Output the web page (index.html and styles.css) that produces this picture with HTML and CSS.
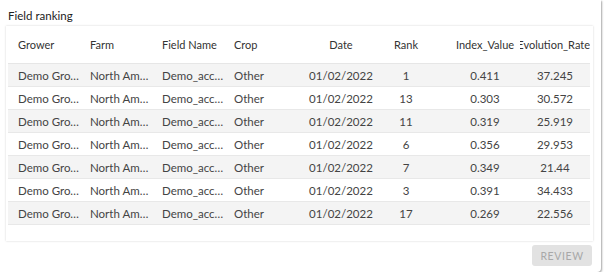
FILE: index.html
```html
<!DOCTYPE html>
<html lang="en">
<head>
  <meta charset="UTF-8" />
  <title>Field ranking</title>
  <link rel="stylesheet" href="styles.css">
</head>
<body>
  <div class="card">
    <div class="card-title">Field ranking</div>
    <div class="table-wrap">
      <div class="grid head">
        <div class="cell">Grower</div>
        <div class="cell">Farm</div>
        <div class="cell">Field Name</div>
        <div class="cell">Crop</div>
        <div class="cell c">Date</div>
        <div class="cell c">Rank</div>
        <div class="cell c idx">Index_Value</div>
        <div class="cell c evo">Evolution_Rate</div>
      </div>
      <div class="grid row">
        <div class="cell">Demo Grower</div><div class="cell">North America</div><div class="cell">Demo_account</div><div class="cell">Other</div>
        <div class="cell c">01/02/2022</div><div class="cell c">1</div><div class="cell c idx">0.411</div><div class="cell c evo">37.245</div>
      </div>
      <div class="grid row">
        <div class="cell">Demo Grower</div><div class="cell">North America</div><div class="cell">Demo_account</div><div class="cell">Other</div>
        <div class="cell c">01/02/2022</div><div class="cell c">13</div><div class="cell c idx">0.303</div><div class="cell c evo">30.572</div>
      </div>
      <div class="grid row">
        <div class="cell">Demo Grower</div><div class="cell">North America</div><div class="cell">Demo_account</div><div class="cell">Other</div>
        <div class="cell c">01/02/2022</div><div class="cell c">11</div><div class="cell c idx">0.319</div><div class="cell c evo">25.919</div>
      </div>
      <div class="grid row">
        <div class="cell">Demo Grower</div><div class="cell">North America</div><div class="cell">Demo_account</div><div class="cell">Other</div>
        <div class="cell c">01/02/2022</div><div class="cell c">6</div><div class="cell c idx">0.356</div><div class="cell c evo">29.953</div>
      </div>
      <div class="grid row">
        <div class="cell">Demo Grower</div><div class="cell">North America</div><div class="cell">Demo_account</div><div class="cell">Other</div>
        <div class="cell c">01/02/2022</div><div class="cell c">7</div><div class="cell c idx">0.349</div><div class="cell c evo">21.44</div>
      </div>
      <div class="grid row">
        <div class="cell">Demo Grower</div><div class="cell">North America</div><div class="cell">Demo_account</div><div class="cell">Other</div>
        <div class="cell c">01/02/2022</div><div class="cell c">3</div><div class="cell c idx">0.391</div><div class="cell c evo">34.433</div>
      </div>
      <div class="grid row">
        <div class="cell">Demo Grower</div><div class="cell">North America</div><div class="cell">Demo_account</div><div class="cell">Other</div>
        <div class="cell c">01/02/2022</div><div class="cell c">17</div><div class="cell c idx">0.269</div><div class="cell c evo">22.556</div>
      </div>
    </div>
    <div class="actions">
      <button class="review-btn" disabled>Review</button>
    </div>
  </div>
</body>
</html>
```

FILE: styles.css
```css
body {
  margin: 0;
  background: #fff;
  font-family: Lato, 'Liberation Sans', sans-serif;
  color: #3c3c3c;
}
.card {
  width: 595px;
  height: 272px;
  padding: 0 0 0 6px;
  background: #fff;
  border-radius: 0 0 4px 0;
  box-shadow: 1px 1px 2px rgba(0, 0, 0, 0.35);
  display: flex;
  flex-direction: column;
}
.card-title {
  font-size: 11.5px;
  color: #222;
  padding: 9px 0 0 2px;
  height: 17px;
}
/* table */
.table-wrap {
  width: 587px;
  height: 215px;
  box-shadow: 0 0 2px rgba(0, 0, 0, 0.18);
  background: #fff;
}
.grid {
  display: grid;
  grid-template-columns: 72px 72px 72px 72px 90px 40px 94px 70px;
  margin-left: 2px;
  width: 582px;
}
.cell {
  padding: 0 0 0 10px;
  white-space: nowrap;
  overflow: hidden;
  text-overflow: ellipsis;
}
.cell.c {
  text-align: center;
  padding: 0;
  text-overflow: clip;
}
.cell.idx {
  padding-left: 24px;
}
.head {
  height: 37px;
  align-items: center;
  font-size: 11px;
  color: #333;
  border-bottom: 1px solid #e6e6e6;
}
.head .evo {
  direction: rtl;
  text-align: center;
}
.row {
  height: 22px;
  align-items: center;
  font-size: 11.5px;
  color: #444;
  border-bottom: 1px solid #e8e8e8;
}
.row:nth-child(even) {
  background: #f4f4f4;
}
/* footer */
.actions {
  display: flex;
  justify-content: flex-end;
  padding: 4px 9px 0 0;
}
.review-btn {
  width: 60px;
  height: 21px;
  border: none;
  border-radius: 3px;
  background: #e2e2e2;
  color: #a8a8a8;
  font-family: Lato, 'Liberation Sans', sans-serif;
  font-size: 10.5px;
  letter-spacing: 0.6px;
  text-transform: uppercase;
  padding: 0;
}
```
